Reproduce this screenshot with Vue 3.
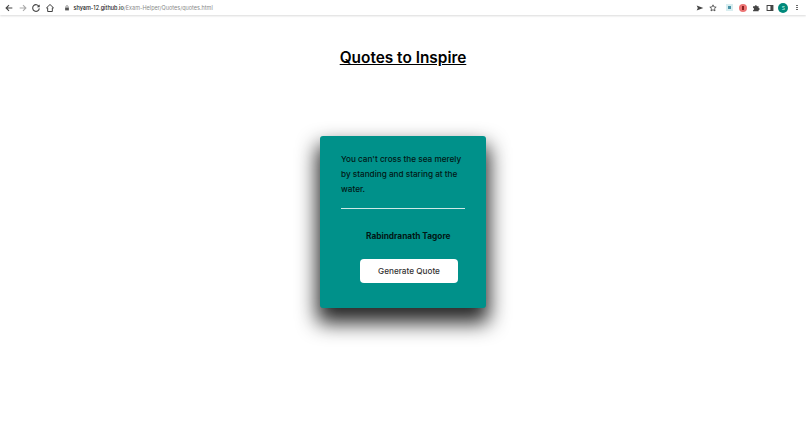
<script setup>
const quote = "You can't cross the sea merely by standing and staring at the water."
</script>

<template>
  <div class="page">
    <header class="bar">
      <div class="nav">
        <svg class="ic" viewBox="0 0 12 12"><path d="M10 6H2.500M6 2.500 2.500 6 6 9.500" fill="none" stroke="#444" stroke-width="1.300"/></svg>
        <svg class="ic" viewBox="0 0 12 12"><path d="M2 6h7.500M6 2.500 9.500 6 6 9.500" fill="none" stroke="#aaa" stroke-width="1.300"/></svg>
        <svg class="ic" viewBox="0 0 12 12"><path d="M9.600 4.200A4 4 0 1 0 10 6.500" fill="none" stroke="#444" stroke-width="1.300"/><path d="M10.400 1.800v3.400H7z" fill="#444"/></svg>
        <svg class="ic" viewBox="0 0 12 12"><path d="M6 1.800 1.800 5.800h1.400v4.400h5.600V5.800h1.400z" fill="none" stroke="#444" stroke-width="1.200"/></svg>
      </div>
      <svg class="lock" viewBox="0 0 8 8"><rect x="1.500" y="3.400" width="5" height="3.800" fill="#555"/><path d="M2.600 3.400V2.200a1.400 1.400 0 0 1 2.800 0v1.200" fill="none" stroke="#555" stroke-width=".8"/></svg>
      <div class="url"><span class="host">shyam-12.github.io</span><span class="path">/Exam-Helper/Quotes/quotes.html</span></div>
      <div class="tools">
        <svg class="ic" viewBox="0 0 12 12"><path d="M2 3 10 6l-8 3 1.400-3z" fill="#444"/></svg>
        <svg class="ic" viewBox="0 0 12 12"><path d="m6 2.200 1.100 2.500 2.700.3-2 1.800.6 2.700L6 8.100 3.600 9.500l.6-2.700-2-1.800 2.700-.3z" fill="none" stroke="#444" stroke-width="1"/></svg>
        <span class="slot first"><span class="ext-a"><i></i></span></span>
        <span class="slot"><span class="ext-b"><i></i></span></span>
        <svg class="ic" viewBox="0 0 12 12"><path d="M2.500 4h2a1.300 1.300 0 0 1 2.600 0h2v2a1.300 1.300 0 0 1 0 2.600v1.400H2.500V8.400a1.200 1.200 0 0 0 0-2.400z" fill="#444"/></svg>
        <svg class="ic" viewBox="0 0 12 12"><rect x="2.500" y="3" width="7" height="6" fill="none" stroke="#444" stroke-width="1.200"/><rect x="6.500" y="3" width="3" height="6" fill="#444"/></svg>
        <span class="avatar">S</span>
        <span class="slot"><span class="dots"><i></i><i></i><i></i></span></span>
      </div>
    </header>

    <main class="main">
      <h1 class="title">Quotes to Inspire</h1>
      <section class="card">
        <p class="quote">{{ quote }}</p>
        <hr class="rule" />
        <p class="author">Rabindranath Tagore</p>
        <button class="btn">Generate Quote</button>
      </section>
    </main>
  </div>
</template>

<style>
html, body { margin: 0; background: #fff; }
</style>

<style scoped>
.page {
  width: 806px;
  height: 427px;
  overflow: hidden;
  font-family: Inter, "Noto Sans", sans-serif;
  color: #000;
  background: #fff;
}
.bar {
  height: 15px;
  display: flex;
  align-items: center;
  padding-left: 4px;
  background: #fff;
  box-shadow: 0 1px 2px rgba(0, 0, 0, .15);
  position: relative;
}
.nav { display: flex; gap: 3.500px; }
.ic { width: 10px; height: 10px; flex: none; }
.lock { width: 6px; height: 6px; margin-left: 9px; }
.url { margin-left: 4px; font-size: 5.500px; white-space: nowrap; }
.host { color: #222; font-weight: 500; }
.path { color: #8a8a8a; }
.tools { margin-left: auto; margin-right: 4px; display: flex; align-items: center; gap: 3.600px; }
.slot { width: 10px; height: 10px; display: flex; align-items: center; justify-content: center; }
.slot.first { margin-left: 2px; }
.ext-a { width: 7px; height: 7px; background: #d8eef0; display: flex; align-items: center; justify-content: center; }
.ext-a i { width: 3px; height: 3px; background: #4a94a8; }
.ext-b { width: 8px; height: 8px; border-radius: 50%; background: #ec7474; display: flex; align-items: center; justify-content: center; }
.ext-b i { width: 2px; height: 4px; background: #8b1f1f; }
.avatar { width: 10px; height: 10px; border-radius: 50%; background: #00897b; color: #cfe; font-size: 5px; display: flex; align-items: center; justify-content: center; }
.dots { display: flex; flex-direction: column; gap: 1px; }
.dots i { width: 1.300px; height: 1.300px; background: #555; border-radius: 50%; }

.main { display: flex; flex-direction: column; align-items: center; }
.title {
  margin: 32px 0 0;
  font-size: 15.400px;
  line-height: 22px;
  font-weight: 600;
  text-decoration: underline;
}
.card {
  box-sizing: border-box;
  width: 166px;
  height: 172px;
  margin-top: 67px;
  padding: 16px 21px 0;
  background: #00918a;
  border-radius: 3px;
  box-shadow: 0 12px 20px 3px rgba(0, 0, 0, .85);
  display: flex;
  flex-direction: column;
}
.quote {
  margin: 0;
  font-size: 8.200px;
  font-weight: 500;
  line-height: 15px;
  color: #021816;
  width: 124px;
}
.rule {
  width: 124px;
  margin: 11px 0 0;
  border: 0;
  height: 1px;
  background: #cfe8e6;
}
.author {
  margin: 21px 0 0 25px;
  font-size: 8.300px;
  line-height: 12px;
  font-weight: 700;
  color: #021816;
  white-space: nowrap;
}
.btn {
  align-self: flex-start;
  margin: 17px 0 0 19px;
  width: 98px;
  height: 24px;
  border: 0;
  border-radius: 4px;
  background: #fff;
  color: #333;
  font: 500 8.200px Inter, "Noto Sans", sans-serif;
  padding: 0;
}
</style>
